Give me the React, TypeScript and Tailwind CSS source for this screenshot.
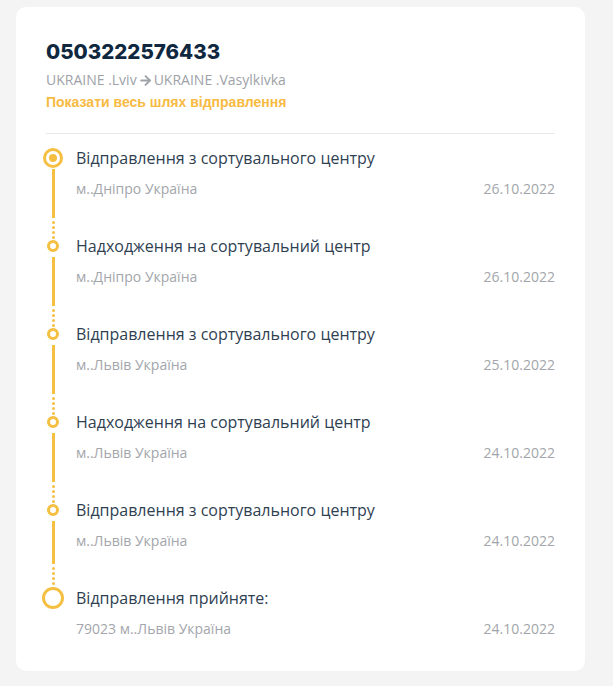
import { ArrowRight } from 'lucide-react'

type Step = {
  title: string
  place: string
  date: string
}

const steps: Step[] = [
  { title: 'Відправлення з сортувального центру', place: 'м..Дніпро Україна', date: '26.10.2022' },
  { title: 'Надходження на сортувальний центр', place: 'м..Дніпро Україна', date: '26.10.2022' },
  { title: 'Відправлення з сортувального центру', place: 'м..Львів Україна', date: '25.10.2022' },
  { title: 'Надходження на сортувальний центр', place: 'м..Львів Україна', date: '24.10.2022' },
  { title: 'Відправлення з сортувального центру', place: 'м..Львів Україна', date: '24.10.2022' },
  { title: 'Відправлення прийняте:', place: '79023 м..Львів Україна', date: '24.10.2022' },
]

function Node({ kind }: { kind: 'current' | 'middle' | 'origin' }) {
  if (kind === 'current') {
    return (
      <div className="flex h-5 w-5 items-center justify-center rounded-full border-[3px] border-[#f5bf42]">
        <div className="h-2 w-2 rounded-full bg-[#f5bf42]" />
      </div>
    )
  }
  if (kind === 'origin') {
    return <div className="h-[22px] w-[22px] rounded-full border-[3.5px] border-[#f5bf42]" />
  }
  return <div className="h-3 w-3 rounded-full border-[3px] border-[#f5bf42]" />
}

function Connector({ overlap }: { overlap: boolean }) {
  return (
    <div className={`flex flex-1 flex-col items-center ${overlap ? 'mb-[-4px]' : 'mb-[2px]'}`}>
      <div className="w-[3px] flex-1 bg-[#f5bf42]" />
      <div className="mt-[3px] flex flex-col items-center gap-[2px]">
        <div className="h-[3px] w-[3px] rounded-full bg-[#f5bf42]" />
        <div className="h-[3px] w-[3px] rounded-full bg-[#f5bf42]" />
        <div className="h-[3px] w-[3px] rounded-full bg-[#f5bf42]" />
        <div className="h-[3px] w-[3px] rounded-full bg-[#f5bf42]" />
      </div>
    </div>
  )
}

export default function App() {
  return (
    <div className="min-h-screen bg-[#f4f4f4] pt-[7px] font-['Open_Sans',sans-serif]">
      <div className="ml-4 h-[664px] w-[569px] rounded-[10px] bg-white px-[30px] pt-[31px]">
        <h1 className="font-['Inter',sans-serif] text-[20.5px] leading-[28px] font-extrabold text-[#0f2840]">
          0503222576433
        </h1>
        <div className="mt-[5px] flex items-center text-[14px] leading-[18px] text-[#9ea2a8]">
          <span>UKRAINE .Lviv</span>
          <ArrowRight className="mx-[1px] h-[15px] w-[15px]" strokeWidth={3} />
          <span>UKRAINE .Vasylkivka</span>
        </div>
        <a className="mt-[4px] block font-['Liberation_Sans',sans-serif] text-[14px] leading-[18px] font-bold text-[#f7ba42]">
          Показати весь шлях відправлення
        </a>
        <div className="mt-[22px] border-t border-[#e7e9ec]" />

        <div className="mt-[13px] -ml-[4px]">
          {steps.map((s, i) => {
            const kind = i === 0 ? 'current' : i === steps.length - 1 ? 'origin' : 'middle'
            const last = i === steps.length - 1
            const nextSmall = i + 1 < steps.length - 1
            return (
              <div key={i} className={`flex gap-[12px] ${last ? '' : 'h-[88px]'}`}>
                <div className="flex w-[22px] flex-col items-center">
                  <div className="flex h-[22px] items-center justify-center">
                    <Node kind={kind} />
                  </div>
                  {!last && <Connector overlap={nextSmall} />}
                </div>
                <div className="flex-1">
                  <div className="text-[16px] leading-[22px] text-[#2f3f52]">{s.title}</div>
                  <div className="mt-[11px] flex justify-between text-[14px] leading-[18px] text-[#a3a6ab]">
                    <span>{s.place}</span>
                    <span>{s.date}</span>
                  </div>
                </div>
              </div>
            )
          })}
        </div>
      </div>
    </div>
  )
}
